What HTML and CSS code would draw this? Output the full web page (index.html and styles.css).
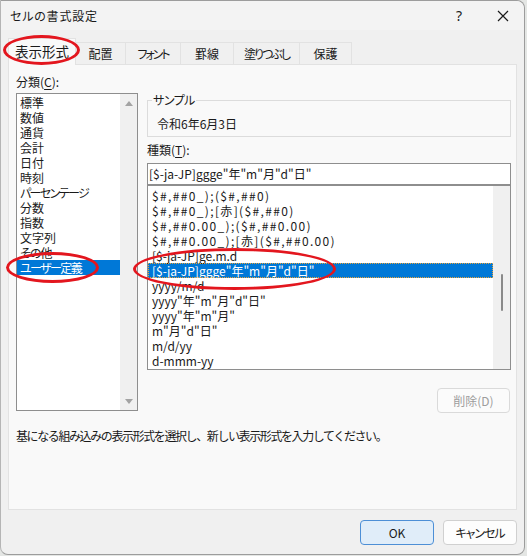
FILE: index.html
```html
<!DOCTYPE html>
<html lang="ja">
<head>
<meta charset="utf-8">
<title>セルの書式設定</title>
<link rel="stylesheet" href="styles.css">
</head>
<body>
<div class="window">
  <div class="titlebar">
    <span class="title">セルの書式設定</span>
    <span class="help">?</span>
    <span class="close"><svg width="12" height="12" viewBox="0 0 12 12"><path d="M1 1L11 11M11 1L1 11" stroke="#1a1a1a" stroke-width="1.2" fill="none"/></svg></span>
  </div>
  <div class="tabs">
    <div class="tab active">表示形式</div>
    <div class="tab t-haichi">配置</div>
    <div class="tab t-font kana">フォント</div>
    <div class="tab t-keisen">罫線</div>
    <div class="tab t-nuri kana">塗りつぶし</div>
    <div class="tab t-hogo">保護</div>
  </div>
  <div class="panel">
    <div class="top">
      <div class="left">
        <div class="label">分類(<u>C</u>):</div>
        <div class="listbox cat">
          <ul class="items">
            <li>標準</li>
            <li>数値</li>
            <li>通貨</li>
            <li>会計</li>
            <li>日付</li>
            <li>時刻</li>
            <li class="kana">パーセンテージ</li>
            <li>分数</li>
            <li>指数</li>
            <li>文字列</li>
            <li class="kana-s">その他</li>
            <li class="sel kana">ユーザー定義</li>
          </ul>
          <div class="vscroll arrows"><span class="arrow up"></span><span class="arrow down"></span></div>
        </div>
      </div>
      <div class="right">
        <fieldset class="sample"><legend>サンプル</legend><div class="sample-text">令和6年6月3日</div></fieldset>
        <div class="label kind">種類(<u>T</u>):</div>
        <div class="input">[$-ja-JP]ggge"年"m"月"d"日"</div>
        <div class="listbox fmt">
          <ul class="items">
            <li class="sym">$#,##0_);($#,##0)</li>
            <li class="sym">$#,##0_);[赤]($#,##0)</li>
            <li class="sym">$#,##0.00_);($#,##0.00)</li>
            <li class="sym">$#,##0.00_);[赤]($#,##0.00)</li>
            <li>[$-ja-JP]ge.m.d</li>
            <li class="sel focus">[$-ja-JP]ggge"年"m"月"d"日"</li>
            <li>yyyy/m/d</li>
            <li>yyyy"年"m"月"d"日"</li>
            <li>yyyy"年"m"月"</li>
            <li>m"月"d"日"</li>
            <li>m/d/yy</li>
            <li>d-mmm-yy</li>
          </ul>
          <div class="vscroll"><span class="thumb"></span></div>
        </div>
        <div class="btnrow"><button class="btn disabled">削除(D)</button></div>
      </div>
    </div>
    <p class="desc">基になる組み込みの表示形式を選択し、新しい表示形式を入力してください。</p>
  </div>
  <div class="footer">
    <button class="btn ok">OK</button>
    <button class="btn cancel">キャンセル</button>
  </div>
  <div class="mark m1"></div>
  <div class="mark m2"></div>
  <div class="mark m3"></div>
</div>
</body>
</html>
```
FILE: styles.css
```css
* { box-sizing: border-box; }
html, body { margin: 0; padding: 0; }
body {
  background: #e4e6e4;
  font-family: "Noto Sans CJK JP", "Noto Sans", sans-serif;
  font-size: 12px;
  font-feature-settings: "palt";
  color: #1a1a1a;
  width: 527px;
  height: 556px;
  overflow: hidden;
}
.window {
  position: relative;
  width: 525px;
  height: 555px;
  background: #f0f0f0;
  border: 1px solid #9c9c9c;
  border-left: 1px solid #b5b5b5;
  border-radius: 0 8px 8px 8px;
  display: flex;
  flex-direction: column;
}
.titlebar {
  height: 29px;
  display: flex;
  align-items: center;
  background: #f3f3f3;
  border-radius: 0 8px 0 0;
  padding-left: 9px;
}
.title {
  font-size: 12px;
  flex: 1;
  letter-spacing: 0.8px;
}
.help {
  font-family: "Noto Sans", sans-serif;
  font-size: 14px;
  width: 20px;
  text-align: center;
  margin-right: 28px;
}
.close {
  display: flex;
  width: 12px;
  height: 12px;
  margin-right: 15px;
}
.tabs {
  height: 34px;
  display: flex;
  align-items: flex-end;
  padding-left: 7px;
  position: relative;
  z-index: 1;
}
.tab {
  height: 22px;
  display: flex;
  align-items: center;
  justify-content: center;
  border: 1px solid #e2e2e2;
  border-bottom: none;
  border-left: none;
  background: #f0f0f0;
  font-size: 12px;
}
.tab.kana { letter-spacing: -2px; }
.tab.active {
  height: 27px;
  width: 68px;
  margin-bottom: -1px;
  background: #f9f9f9;
  border-left: 1px solid #e2e2e2;
  font-size: 13.5px;
  padding-bottom: 2px;
}
.t-haichi { width: 50px; }
.t-font { width: 55px; }
.t-keisen { width: 53px; }
.t-nuri { width: 66px; }
.t-hogo { width: 52px; }
.panel {
  width: 509px;
  height: 446px;
  margin-left: 7px;
  background: #f9f9f9;
  border: 1px solid #e2e2e2;
  padding: 8px 5px 0 7px;
}
.top {
  display: flex;
  gap: 9px;
}
.left { width: 122px; }
.right { width: 364px; }
.label {
  height: 18px;
  line-height: 18px;
  margin-bottom: 2px;
}
.label u { text-underline-offset: 2px; }
.listbox {
  display: flex;
  background: #ffffff;
  border: 1px solid #8e8e8e;
}
.listbox.cat { height: 318px; }
.listbox .items {
  list-style: none;
  margin: 0;
  flex: 1;
  min-width: 0;
}
.cat .items { padding: 1px 0 0 0; }
.items li {
  height: 15px;
  line-height: 15px;
  white-space: nowrap;
  font-size: 12px;
}
.cat .items li { padding-left: 3px; }
.cat .items li.kana { letter-spacing: -1.6px; }
.cat .items li.kana-s { letter-spacing: -1px; }
.items li.sel {
  background: #0078d7;
  color: #ffffff;
}
.items li.focus {
  outline: 1px dotted #e8a33a;
  outline-offset: -1px;
}
.vscroll {
  width: 17px;
  background: #f0f0f0;
  display: flex;
  flex-direction: column;
  align-items: center;
}
.vscroll.arrows {
  justify-content: space-between;
  padding: 7px 0 6px 0;
}
.arrow {
  width: 0;
  height: 0;
  border-left: 4.5px solid transparent;
  border-right: 4.5px solid transparent;
}
.arrow.up { border-bottom: 5px solid #a3a3a3; }
.arrow.down { border-top: 5px solid #a3a3a3; }
.sample {
  margin: 19px 0 0 0;
  padding: 0;
  height: 45px;
  border: 1px solid #dcdcdc;
}
.sample legend {
  padding: 0 1px;
  margin-left: 4px;
  line-height: 16px;
  font-size: 12px;
  letter-spacing: -0.5px;
}
.sample-text {
  line-height: 16px;
  margin-top: 8px;
  padding-left: 9px;
}
.label.kind {
  margin-top: 4px;
  margin-bottom: 4px;
}
.input {
  height: 22px;
  border: 1px solid #8e8e8e;
  background: #ffffff;
  line-height: 20px;
  padding-left: 1px;
  white-space: nowrap;
}
.listbox.fmt {
  height: 185px;
  margin-top: 0;
}
.fmt .items { padding: 2px 0 0 0; }
.fmt .items li { padding-left: 4px; }
.fmt .items li.sym { letter-spacing: 1.35px; }
.thumb {
  display: block;
  width: 2px;
  height: 37px;
  margin-top: 88px;
  background: #8a8a8a;
  border-radius: 1px;
}
.btnrow {
  display: flex;
  justify-content: flex-end;
  margin-top: 18px;
  padding-right: 1px;
}
.btn {
  font-family: "Noto Sans CJK JP", "Noto Sans", sans-serif;
  font-size: 12px;
  font-feature-settings: "palt";
  height: 25px;
  border-radius: 4px;
  border: 1px solid #d0d0d0;
  background: #fdfdfd;
  color: #1a1a1a;
  padding: 0;
}
.btn.disabled {
  width: 73px;
  color: #9d9d9d;
  border-color: #dadada;
  background: #fbfbfb;
}
.desc {
  margin: 15px 0 0 0;
  line-height: 16px;
  font-feature-settings: normal;
  letter-spacing: -1.4px;
  white-space: nowrap;
}
.footer {
  display: flex;
  justify-content: flex-end;
  gap: 9px;
  padding: 10px 7px 0 0;
}
.btn.ok {
  width: 74px;
  background: #e0edf9;
  border-color: #4d8fd6;
}
.btn.cancel { width: 74px; letter-spacing: -1px; }
.mark {
  position: absolute;
  border: 3px solid #e3161e;
  border-radius: 50%;
  z-index: 5;
  pointer-events: none;
}
.m1 { left: 2px; top: 34px; width: 77px; height: 30px; }
.m2 { left: 5px; top: 251px; width: 93px; height: 31px; }
.m3 { left: 132px; top: 247px; width: 203px; height: 42px; }
```
